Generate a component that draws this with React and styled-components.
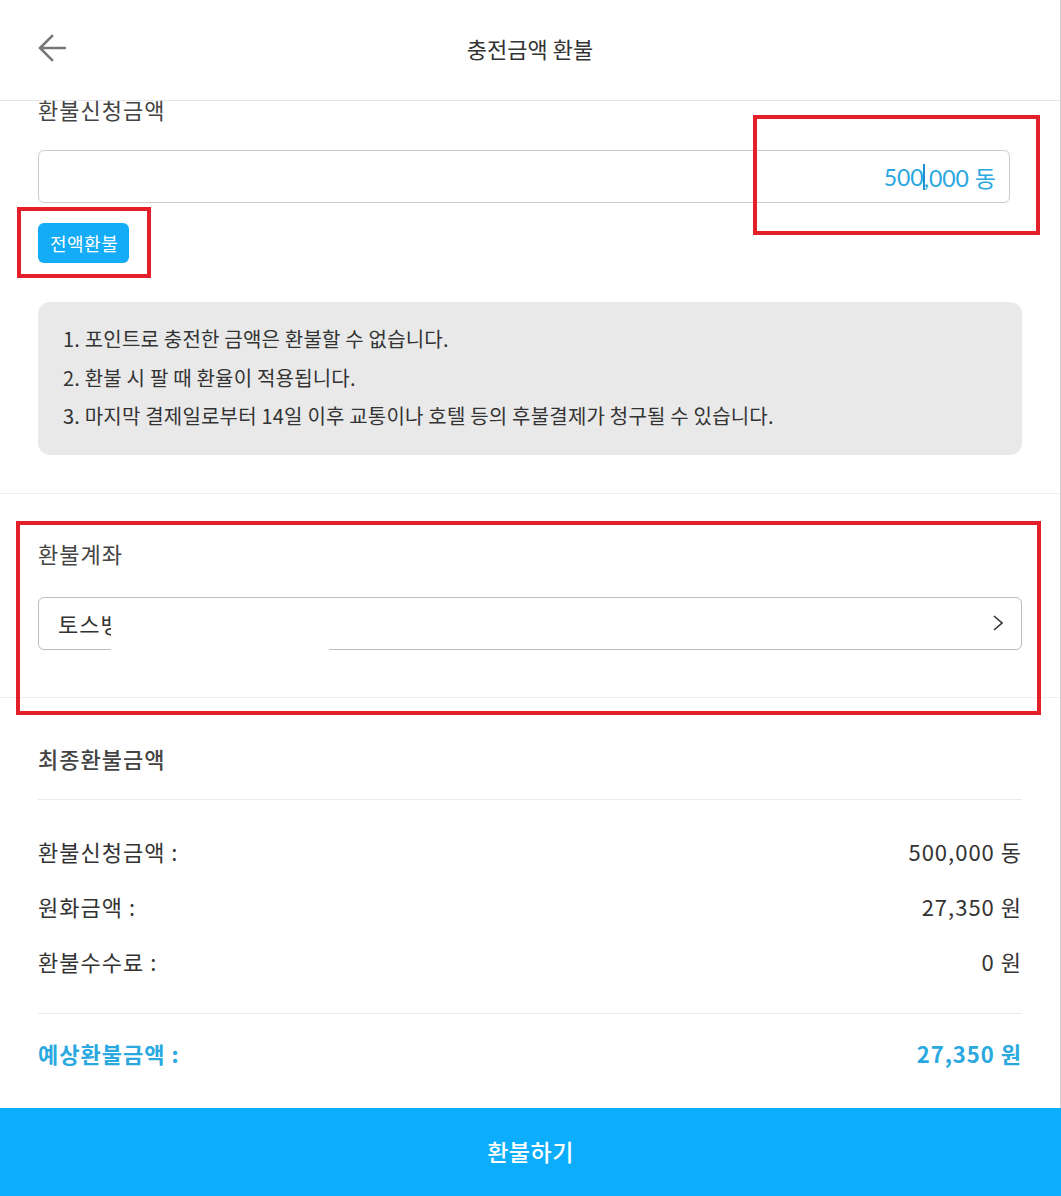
import styled, { createGlobalStyle } from "styled-components";

const GlobalStyle = createGlobalStyle`
  html, body {
    margin: 0;
    padding: 0;
    background: #ffffff;
  }
  body {
    font-family: "Noto Sans CJK KR", "Noto Sans", sans-serif;
    color: #333333;
  }
  * {
    box-sizing: border-box;
  }
`;

const Screen = styled.div`
  position: relative;
  width: 1061px;
  height: 1196px;
  overflow: hidden;
  display: flex;
  flex-direction: column;
`;

const Main = styled.main`
  flex: 1;
  border-right: 1px solid #cfcfcf;
  display: flex;
  flex-direction: column;
`;

const Header = styled.header`
  height: 101px;
  border-bottom: 1px solid #e6e6e6;
  display: grid;
  grid-template-columns: 120px 1fr 120px;
  align-items: center;
  padding-bottom: 4px;
`;

const BackButton = styled.button`
  border: 0;
  background: none;
  padding: 0 0 0 38px;
  display: flex;
  align-items: center;
  cursor: pointer;
`;

const Title = styled.h1`
  margin: 0;
  text-align: center;
  font-size: 22px;
  font-weight: 400;
  color: #333333;
`;

const Section = styled.section`
  padding: ${(p) => p.$pad};
  border-bottom: ${(p) => (p.$last ? "none" : "1px solid #f0f0f0")};
  display: flex;
  flex-direction: column;
  align-items: flex-start;
`;

const Label = styled.div`
  font-size: 22px;
  letter-spacing: 1px;
  line-height: ${(p) => p.$lh || "24px"};
  color: #444444;
  font-weight: ${(p) => (p.$strong ? 500 : 400)};
`;

const AmountField = styled.div`
  align-self: stretch;
  margin: 33px 12px 0 0;
  height: 53px;
  border: 1px solid #cccccc;
  border-radius: 6px;
  display: flex;
  align-items: center;
  justify-content: flex-end;
  padding-right: 13px;
  font-family: Lato, "Noto Sans CJK KR", sans-serif;
  font-size: 23px;
  color: #2aa8e0;
`;

const Caret = styled.span`
  display: inline-block;
  width: 2px;
  height: 26px;
  margin: 0 -1px;
  background: #1e8fd0;
  vertical-align: middle;
`;

const Chip = styled.button`
  margin-top: 20px;
  height: 40px;
  padding: 0 11px 0 12px;
  border: 0;
  border-radius: 6px;
  background: #14acf6;
  color: #ffffff;
  font-family: inherit;
  font-size: 18px;
  letter-spacing: 0.5px;
`;

const Notice = styled.ol`
  align-self: stretch;
  margin: 39px 0 0;
  padding: 18px 25px 19px;
  list-style: none;
  background: #e9e9e9;
  border-radius: 12px;
  font-size: 20px;
  letter-spacing: 0.2px;
  line-height: 38.5px;
  color: #333333;
`;

const AccountField = styled.button`
  position: relative;
  align-self: stretch;
  margin-top: 32px;
  height: 53px;
  border: 1px solid #bdbdbd;
  border-radius: 6px;
  background: #ffffff;
  display: flex;
  align-items: center;
  justify-content: space-between;
  padding: 0 18px 0 19px;
  font-family: inherit;
  font-size: 22px;
  letter-spacing: 1px;
  color: #333333;
`;

const Mask = styled.span`
  position: absolute;
  left: 72px;
  top: 3px;
  width: 218px;
  height: 54px;
  background: #ffffff;
`;

const Rule = styled.hr`
  align-self: stretch;
  margin: ${(p) => p.$m};
  border: 0;
  border-top: 1px solid #ebebeb;
`;

const Rows = styled.div`
  align-self: stretch;
  display: flex;
  flex-direction: column;
`;

const Row = styled.div`
  height: 55px;
  display: flex;
  align-items: center;
  justify-content: space-between;
  font-size: 22px;
  letter-spacing: 1px;
  color: ${(p) => (p.$accent ? "#2aa8e0" : "#333333")};
  font-weight: ${(p) => (p.$accent ? 700 : 400)};
`;

const SubmitButton = styled.button`
  height: 88px;
  flex-shrink: 0;
  border: 0;
  background: #0caefc;
  color: #ffffff;
  font-family: inherit;
  font-size: 23px;
  font-weight: 500;
  letter-spacing: 0.5px;
  padding-bottom: 4px;
`;

const Highlight = styled.div`
  position: absolute;
  border: 4px solid #e3202a;
  pointer-events: none;
`;

const BackArrow = () => (
  <svg width="28" height="28" viewBox="0 0 28 28" fill="none">
    <path
      d="M27 14H2.5M14 2L2 14L14 26"
      stroke="#777777"
      strokeWidth="2.6"
      strokeLinecap="square"
    />
  </svg>
);

const Chevron = () => (
  <svg width="10" height="16" viewBox="0 0 10 16" fill="none">
    <path d="M1 1L9 8L1 15" stroke="#333333" strokeWidth="1.6" />
  </svg>
);

const notices = [
  "1. 포인트로 충전한 금액은 환불할 수 없습니다.",
  "2. 환불 시 팔 때 환율이 적용됩니다.",
  "3. 마지막 결제일로부터 14일 이후 교통이나 호텔 등의 후불결제가 청구될 수 있습니다.",
];

const summary = [
  ["환불신청금액 :", "500,000 동"],
  ["원화금액 :", "27,350 원"],
  ["환불수수료 :", "0 원"],
];

const marks = [
  { left: 753, top: 115, width: 287, height: 120 },
  { left: 17, top: 207, width: 134, height: 71 },
  { left: 16, top: 521, width: 1025, height: 194 },
];

export default function App() {
  return (
    <Screen>
      <GlobalStyle />
      <Main>
        <Header>
          <BackButton aria-label="back">
            <BackArrow />
          </BackButton>
          <Title>충전금액 환불</Title>
          <span />
        </Header>

        <Section $pad="0 38px 38px">
          <Label $lh="16px">환불신청금액</Label>
          <AmountField>
            500<Caret />,000 동
          </AmountField>
          <Chip>전액환불</Chip>
          <Notice>
            {notices.map((n) => (
              <li key={n}>{n}</li>
            ))}
          </Notice>
        </Section>

        <Section $pad="47px 38px 47px">
          <Label>환불계좌</Label>
          <AccountField>
            <span>토스뱅</span>
            <Chevron />
            <Mask />
          </AccountField>
        </Section>

        <Section $pad="48px 38px 0" $last>
          <Label $strong>최종환불금액</Label>
          <Rule $m="29px 0 0" />
          <Rows style={{ padding: "24px 0" }}>
            {summary.map(([k, v]) => (
              <Row key={k}>
                <span>{k}</span>
                <span>{v}</span>
              </Row>
            ))}
          </Rows>
          <Rule $m="0" />
          <Rows style={{ paddingTop: "12px" }}>
            <Row $accent>
              <span>예상환불금액 :</span>
              <span>27,350 원</span>
            </Row>
          </Rows>
        </Section>
      </Main>
      <SubmitButton>환불하기</SubmitButton>

      {marks.map((m, i) => (
        <Highlight key={i} style={m} />
      ))}
    </Screen>
  );
}
